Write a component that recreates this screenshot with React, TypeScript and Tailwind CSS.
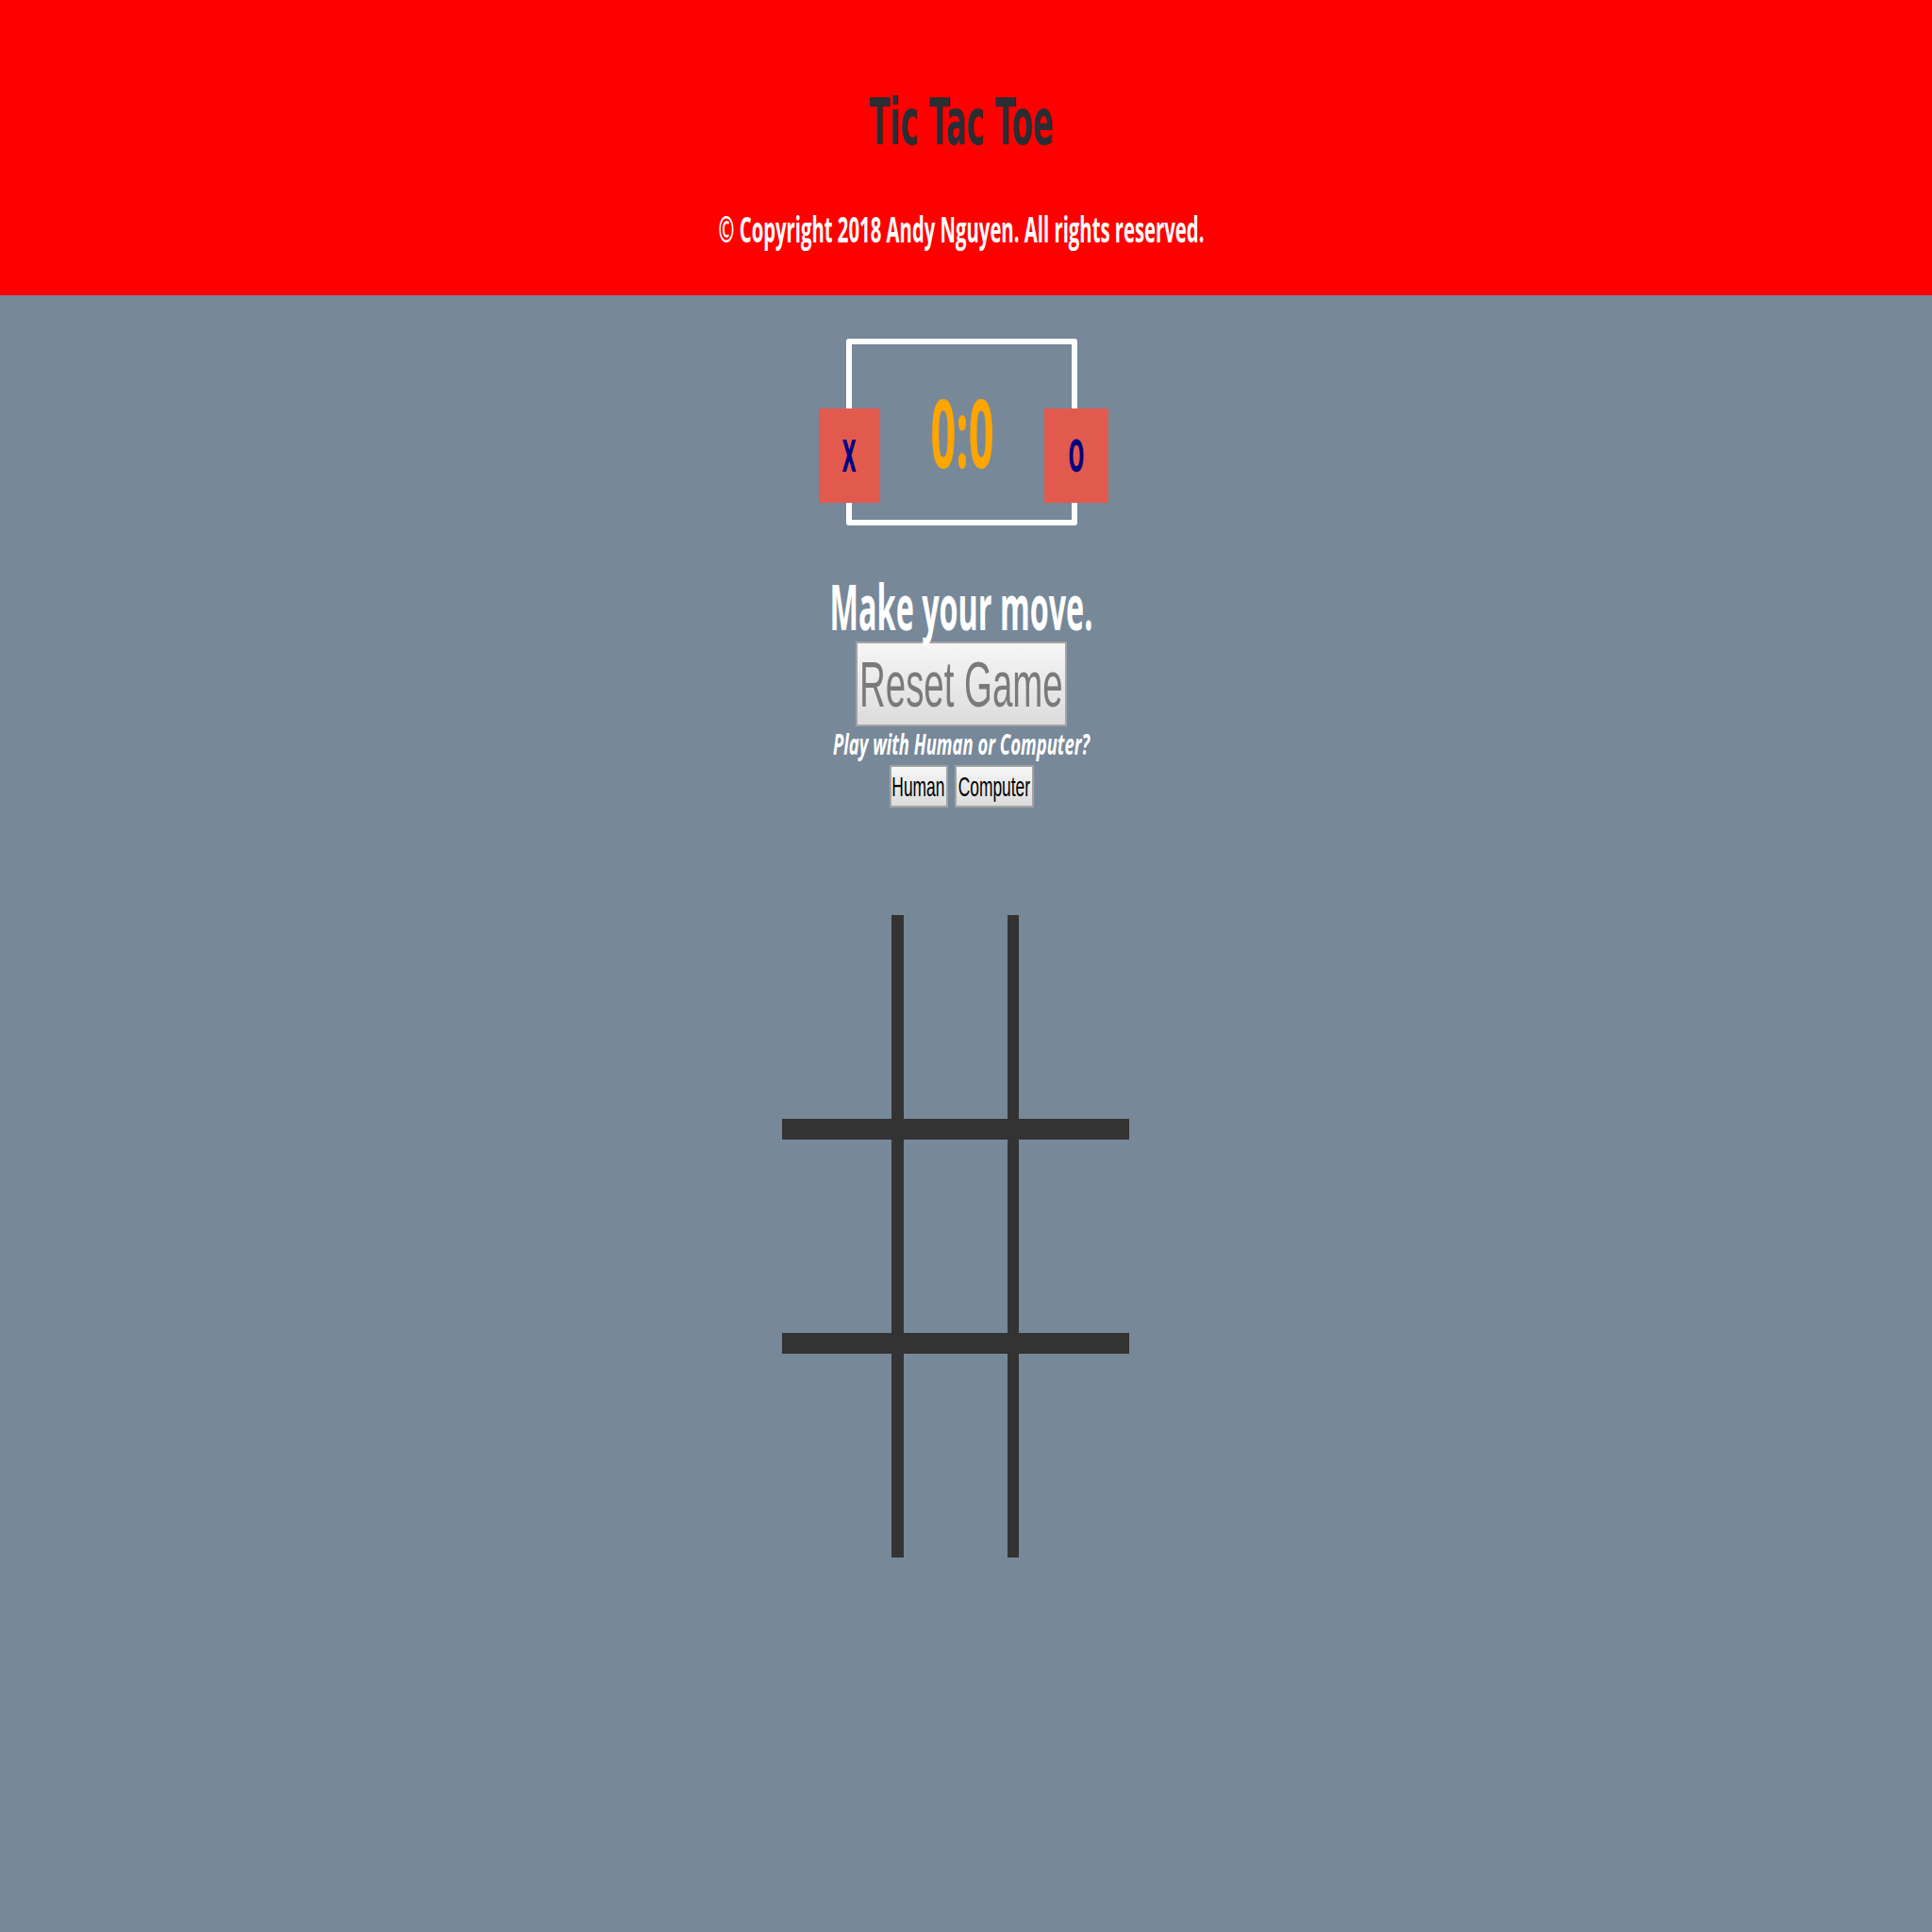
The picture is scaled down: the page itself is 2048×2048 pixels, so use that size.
import React from "react";

function Cell({ className }: { className: string }) {
  return <div className={"border-[#333333] " + className}></div>;
}

export default function App() {
  return (
    <div className="min-h-screen w-full bg-[#778899] flex flex-col">
      <header className="w-full h-[313px] bg-[#ff0000] flex flex-col items-center pt-[96px] pr-[10px]">
        <h1 className="w-full h-[68px] text-center text-[68px] leading-[68px] font-bold text-[#2b2d33] font-['DejaVu_Sans',sans-serif] scale-x-[0.475]">
          Tic Tac Toe
        </h1>
        <p className="w-full mt-[59px] h-[38px] text-center text-[38px] leading-[38px] font-bold text-white font-['Open_Sans',sans-serif] scale-x-[0.534]">
          © Copyright 2018 Andy Nguyen. All rights reserved.
        </p>
      </header>

      <main className="w-full flex flex-col items-center pr-[10px]">
        <div className="mt-[46px] w-[245px] h-[198px] border-[6px] border-white rounded-[3px] flex items-start">
          <div className="-ml-[35px] mt-[68px] w-[65px] h-[100px] shrink-0 bg-[#e25a4d] flex items-center justify-center">
            <span className="text-[47px] leading-[47px] font-bold text-[#000080] font-['DejaVu_Sans',sans-serif] scale-x-[0.42]">X</span>
          </div>
          <div className="flex-1 mt-[42px] h-[100px] text-center text-[100px] leading-[100px] font-bold text-[#ffa500] font-['Open_Sans',sans-serif] scale-x-[0.47]">
            0:0
          </div>
          <div className="-mr-[39px] mt-[68px] w-[68px] h-[100px] shrink-0 bg-[#e25a4d] flex items-center justify-center">
            <span className="text-[47px] leading-[47px] font-bold text-[#000080] font-['DejaVu_Sans',sans-serif] scale-x-[0.42]">O</span>
          </div>
        </div>

        <h2 className="w-full mt-[52px] h-[66px] text-center text-[66px] leading-[66px] font-bold text-white font-['Open_Sans',sans-serif] scale-x-[0.49]">
          Make your move.
        </h2>

        <button className="mt-[5px] w-[224px] h-[90px] border-2 border-[#a3a3a3] bg-linear-to-b from-[#f6f6f6] to-[#dcdcdc] flex items-center justify-center overflow-hidden">
          <span className="text-[68px] leading-[68px] text-[#7a7a7a] font-['Liberation_Sans',sans-serif] scale-x-[0.565] whitespace-nowrap">Reset Game</span>
        </button>

        <p className="w-full mt-[3px] h-[31px] text-center text-[31px] leading-[31px] font-bold italic text-white font-['Open_Sans',sans-serif] scale-x-[0.596]">
          Play with Human or Computer?
        </p>

        <div className="mt-[7px] flex gap-[7px]">
          <button className="w-[62px] h-[45px] border-2 border-[#a3a3a3] bg-linear-to-b from-[#f6f6f6] to-[#dcdcdc] flex items-center justify-center overflow-hidden">
            <span className="text-[30px] leading-[30px] text-black font-['Liberation_Sans',sans-serif] scale-x-[0.58] whitespace-nowrap">Human</span>
          </button>
          <button className="w-[84px] h-[45px] border-2 border-[#a3a3a3] bg-linear-to-b from-[#f6f6f6] to-[#dcdcdc] flex items-center justify-center overflow-hidden">
            <span className="text-[30px] leading-[30px] text-black font-['Liberation_Sans',sans-serif] scale-x-[0.58] whitespace-nowrap">Computer</span>
          </button>
        </div>

        <div className="mt-[114px] mr-[12px] grid grid-cols-[116px_135px_117px] grid-rows-[216px_249px_216px]">
          <Cell className="" />
          <Cell className="border-l-[13px] border-r-[12px]" />
          <Cell className="" />
          <Cell className="border-t-[22px] border-b-[22px]" />
          <Cell className="border-l-[13px] border-r-[12px] border-t-[22px] border-b-[22px]" />
          <Cell className="border-t-[22px] border-b-[22px]" />
          <Cell className="" />
          <Cell className="border-l-[13px] border-r-[12px]" />
          <Cell className="" />
        </div>
      </main>
    </div>
  );
}
